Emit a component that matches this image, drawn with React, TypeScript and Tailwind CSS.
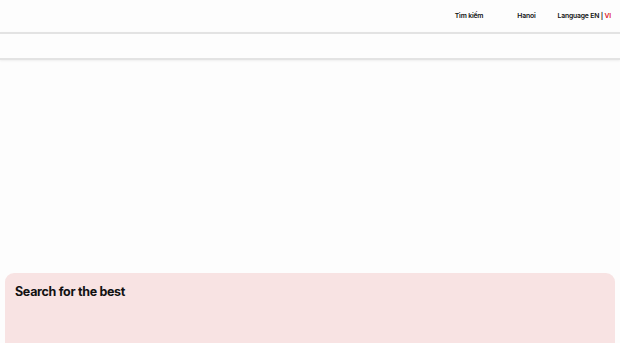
export default function App() {
  return (
    <main className="min-h-screen bg-[#fdfdfd] text-[#111] font-['Inter','Noto_Sans',sans-serif]">
      <header className="h-[32px] flex items-center justify-end pr-[9px] text-[6.8px] font-semibold tracking-tight">
        <nav className="flex items-center">
          <a className="mr-[34px]">Tìm kiếm</a>
          <a className="mr-[22px]">Hanoi</a>
          <span>
            Language EN | <span className="text-[#e0212b]">VI</span>
          </span>
        </nav>
      </header>
      <div className="h-[28px] border-t-2 border-b-2 border-[#e3e3e3] shadow-[0_1px_2px_rgba(0,0,0,0.06)]" />

      <div className="h-[213px]" />

      <section className="mx-[5px] h-[80px] rounded-t-[9px] bg-[#f8e3e3] px-[10px] pt-[10px]">
        <h2 className="text-[12.5px] font-bold tracking-tight">Search for the best</h2>
      </section>
    </main>
  );
}
